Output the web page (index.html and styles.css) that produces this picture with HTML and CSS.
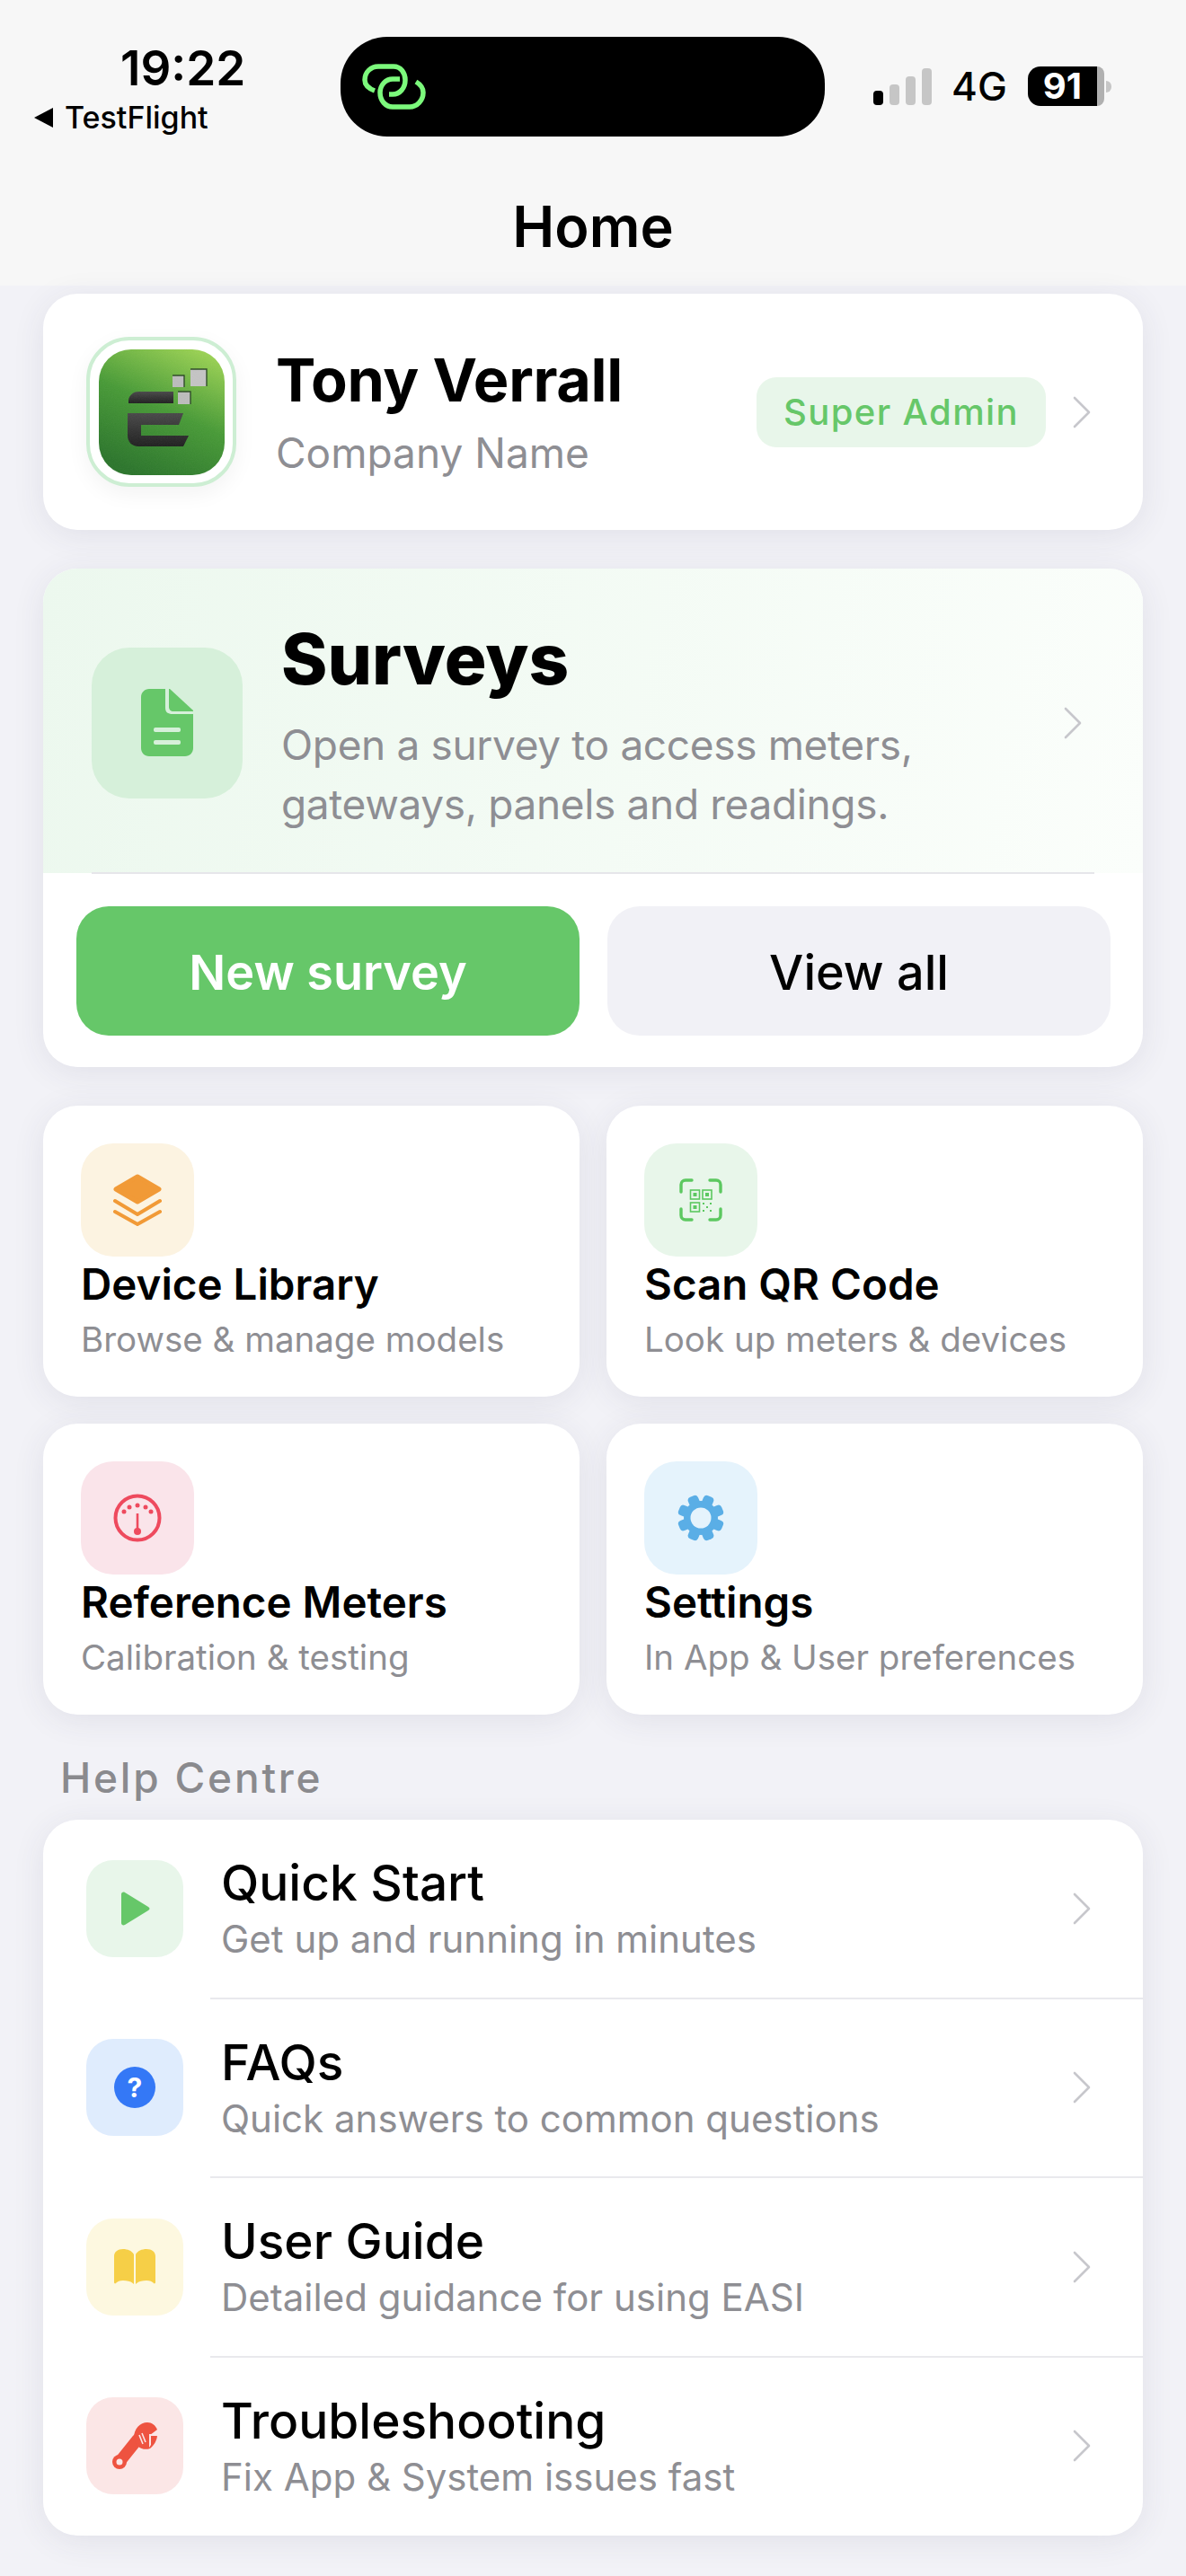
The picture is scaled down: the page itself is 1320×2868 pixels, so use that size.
FILE: index.html
```html
<!DOCTYPE html>
<html lang="en">
<head>
<meta charset="utf-8">
<title>Home</title>
<link rel="stylesheet" href="styles.css">
</head>
<body>
<header class="nav">
  <div class="status">
    <div class="status-left">
      <div class="time">19:22</div>
      <div class="back"><span class="back-arrow"></span><span>TestFlight</span></div>
    </div>
    <div class="island">
      <svg class="link-icon" viewBox="0 0 90 72" fill="none" stroke="#7cf97c" stroke-width="5.5" stroke-linecap="butt">
        <path d="M22 41C14 38 11 34 11 29C11 20 18 14 26 14H43C51 14 56 21 56 29C56 38 50 45 42 45H38"/>
        <path d="M68 31C73 34 76 38 76 43C76 52 69 59 61 59H42C34 59 28 52 28 43C28 35 34 28 42 28H50"/>
      </svg>
    </div>
    <div class="status-right">
      <svg class="signal" viewBox="0 0 65 41">
        <rect x="0" y="25" width="11" height="16" rx="4" fill="#000"/>
        <rect x="18" y="18" width="11" height="23" rx="4" fill="#c6c6c6"/>
        <rect x="36" y="9" width="11" height="32" rx="4" fill="#c6c6c6"/>
        <rect x="54" y="0" width="11" height="41" rx="4" fill="#c6c6c6"/>
      </svg>
      <span class="net">4G</span>
      <div class="battery"><div class="battery-fill">91</div><div class="battery-end"></div><div class="battery-nub"></div></div>
    </div>
  </div>
  <h1 class="nav-title">Home</h1>
</header>

<main class="main">
  <section class="card profile">
    <div class="avatar-ring">
      <svg class="avatar" viewBox="0 0 140 140">
        <defs>
          <linearGradient id="logoBg" x1="0.8" y1="0" x2="0.35" y2="1">
            <stop offset="0" stop-color="#9bd253"/>
            <stop offset="0.5" stop-color="#479a36"/>
            <stop offset="1" stop-color="#2b752b"/>
          </linearGradient>
          <linearGradient id="logoE" x1="0" y1="0" x2="0" y2="1">
            <stop offset="0" stop-color="#484848"/>
            <stop offset="1" stop-color="#1f1f1f"/>
          </linearGradient>
          <filter id="grain" x="0" y="0" width="100%" height="100%">
            <feTurbulence type="fractalNoise" baseFrequency="0.9" numOctaves="2"/>
            <feColorMatrix type="saturate" values="0"/>
            <feComponentTransfer><feFuncA type="linear" slope="0.07"/></feComponentTransfer>
            <feComposite in2="SourceGraphic" operator="in"/>
          </filter>
        </defs>
        <rect width="140" height="140" rx="36" fill="url(#logoBg)"/>
        <path d="M33 60V57C33 52 38 47 44 47H83V60Z" fill="url(#logoE)"/>
        <path d="M32 71H94L89 84H47V96H100L94 108H44C37 108 32 103 32 96Z" fill="url(#logoE)"/>
        <rect x="82" y="29" width="13" height="13" fill="#bcbcbc"/>
        <rect x="102" y="22" width="18" height="19" fill="#c4c4c4"/>
        <rect x="88" y="47" width="14" height="14" fill="#bcbcbc"/>
        <path d="M82 29H95V42M102 22H120V41M88 47H102V61" fill="none" stroke="#2c4a24" stroke-width="1.4"/>
        <rect width="140" height="140" rx="36" fill="#000" filter="url(#grain)"/>
      </svg>
    </div>
    <div class="profile-text">
      <div class="profile-name">Tony Verrall</div>
      <div class="profile-company">Company Name</div>
    </div>
    <div class="badge">Super Admin</div>
    <svg class="chev" viewBox="0 0 20 36"><path d="M2 2L18 18L2 34"/></svg>
  </section>

  <section class="card surveys">
    <div class="surveys-head">
      <div class="surveys-icon">
        <svg class="doc" viewBox="0 0 58 75">
          <path d="M9 0H27V21C27 26 30 28 35 28H58V66C58 71 54 75 49 75H9C4 75 0 71 0 66V9C0 4 4 0 9 0Z" fill="#66c769"/>
          <path d="M31 0H32L58 24V25H36C33 25 31 23 31 20Z" fill="#66c769"/>
          <rect x="14" y="43" width="30" height="5" rx="2" fill="#d6f0da"/>
          <rect x="14" y="57" width="30" height="5" rx="2" fill="#d6f0da"/>
        </svg>
      </div>
      <div class="surveys-text">
        <h2 class="surveys-title">Surveys</h2>
        <p class="surveys-desc">Open a survey to access meters, gateways, panels and readings.</p>
      </div>
      <svg class="chev" viewBox="0 0 20 36"><path d="M2 2L18 18L2 34"/></svg>
    </div>
    <div class="surveys-sep"></div>
    <div class="surveys-actions">
      <div class="btn btn-primary">New survey</div>
      <div class="btn btn-secondary">View all</div>
    </div>
  </section>

  <section class="tiles">
    <div class="card tile">
      <div class="tile-icon bg-orange">
        <svg class="i-layers" viewBox="0 0 54 58" fill="none" stroke="#f19a37" stroke-linecap="round" stroke-linejoin="round">
          <path d="M27 3L51 17L27 31L3 17Z" fill="#f19a37" stroke-width="5"/>
          <path d="M2 30L27 45L52 30" stroke-width="4"/>
          <path d="M2 42L27 56L52 42" stroke-width="4"/>
        </svg>
      </div>
      <div class="tile-title">Device Library</div>
      <div class="tile-sub">Browse &amp; manage models</div>
    </div>
    <div class="card tile">
      <div class="tile-icon bg-green">
        <svg class="i-qr" viewBox="0 0 48 48" fill="none" stroke="#5cc860" stroke-width="3.4" stroke-linecap="round">
          <path d="M2 15V7C2 4 4 2 7 2H14"/>
          <path d="M34 2H41C44 2 46 4 46 7V15"/>
          <path d="M46 34V41C46 44 44 46 41 46H34"/>
          <path d="M14 46H7C4 46 2 44 2 41V34"/>
          <g stroke-width="1.6">
            <rect x="12.5" y="13" width="10" height="10"/>
            <rect x="26" y="13" width="10" height="10"/>
            <rect x="12.5" y="27" width="10" height="10"/>
          </g>
          <g fill="#5cc860" stroke="none">
            <rect x="15.5" y="16" width="4" height="4"/>
            <rect x="29" y="16" width="4" height="4"/>
            <rect x="15.5" y="30" width="4" height="4"/>
            <rect x="26" y="27" width="2" height="2"/>
            <rect x="30" y="31" width="2" height="2"/>
            <rect x="34" y="27" width="2" height="2"/>
            <rect x="26" y="35" width="2" height="2"/>
            <rect x="34" y="35" width="2" height="2"/>
          </g>
        </svg>
      </div>
      <div class="tile-title">Scan QR Code</div>
      <div class="tile-sub">Look up meters &amp; devices</div>
    </div>
    <div class="card tile">
      <div class="tile-icon bg-pink">
        <svg class="i-gauge" viewBox="0 0 54 54" fill="none" stroke="#ee4a5e">
          <circle cx="27" cy="27" r="24.5" stroke-width="4"/>
          <path d="M27 22V42" stroke-width="2.6"/>
          <g fill="#ee4a5e" stroke="none">
            <circle cx="27" cy="13" r="2.5"/>
            <circle cx="27" cy="42" r="4"/>
            <circle cx="18" cy="15" r="2.5"/>
            <circle cx="36" cy="15" r="2.5"/>
            <circle cx="12" cy="20" r="2.5"/>
            <circle cx="42" cy="20" r="2.5"/>
          </g>
        </svg>
      </div>
      <div class="tile-title">Reference Meters</div>
      <div class="tile-sub">Calibration &amp; testing</div>
    </div>
    <div class="card tile">
      <div class="tile-icon bg-blue">
        <svg class="i-gear" viewBox="0 0 52 52">
          <g fill="#5aaee6">
            <circle cx="26" cy="26" r="19"/>
            <rect x="20" y="0" width="12" height="52" rx="4" transform="rotate(22.5 26 26)"/>
            <rect x="20" y="0" width="12" height="52" rx="4" transform="rotate(67.5 26 26)"/>
            <rect x="20" y="0" width="12" height="52" rx="4" transform="rotate(112.5 26 26)"/>
            <rect x="20" y="0" width="12" height="52" rx="4" transform="rotate(157.5 26 26)"/>
          </g>
          <circle cx="26" cy="26" r="11.5" fill="#e5f3fc"/>
        </svg>
      </div>
      <div class="tile-title">Settings</div>
      <div class="tile-sub">In App &amp; User preferences</div>
    </div>
  </section>

  <h3 class="section-label">Help Centre</h3>

  <section class="card list">
    <div class="row">
      <div class="row-icon bg-green">
        <svg class="i-play" viewBox="0 0 34 38"><path d="M2 3C2 1 4 0 6 1L32 17C34 18 34 20 32 21L6 37C4 38 2 37 2 35Z" fill="#66c769"/></svg>
      </div>
      <div class="row-text">
        <div class="row-title">Quick Start</div>
        <div class="row-sub">Get up and running in minutes</div>
      </div>
      <svg class="chev" viewBox="0 0 20 36"><path d="M2 2L18 18L2 34"/></svg>
    </div>
    <div class="row-sep"></div>
    <div class="row">
      <div class="row-icon bg-sky">
        <div class="i-help">?</div>
      </div>
      <div class="row-text">
        <div class="row-title">FAQs</div>
        <div class="row-sub">Quick answers to common questions</div>
      </div>
      <svg class="chev" viewBox="0 0 20 36"><path d="M2 2L18 18L2 34"/></svg>
    </div>
    <div class="row-sep"></div>
    <div class="row">
      <div class="row-icon bg-yellow">
        <svg class="i-book" viewBox="0 0 46 40">
          <path d="M0 8C0 3 4 0 10 0C15 0 20 2 22 6V39C19 36 15 35 10 35C6 35 4 36 2 38C1 39 0 38 0 37Z" fill="#f6cf47"/>
          <path d="M46 8C46 3 42 0 36 0C31 0 26 2 24 6V39C27 36 31 35 36 35C40 35 42 36 44 38C45 39 46 38 46 37Z" fill="#f6cf47"/>
        </svg>
      </div>
      <div class="row-text">
        <div class="row-title">User Guide</div>
        <div class="row-sub">Detailed guidance for using EASI</div>
      </div>
      <svg class="chev" viewBox="0 0 20 36"><path d="M2 2L18 18L2 34"/></svg>
    </div>
    <div class="row-sep"></div>
    <div class="row">
      <div class="row-icon bg-red">
        <svg class="i-wrench" viewBox="0 0 51 52">
          <path d="M8 44L28 19" stroke="#ee5340" stroke-width="13" stroke-linecap="round" fill="none"/>
          <circle cx="8" cy="44" r="8" fill="#ee5340"/>
          <path d="M24 17C24 7 31 0 39 0C44 0 48 3 50 8L42 14H50C50 20 46 26 42 29C34 32 25 27 24 17Z" fill="#ee5340"/>
          <circle cx="8" cy="44" r="3.5" fill="#fbe6e6"/>
          <path d="M41 13L51 13L51 15L43 15L43 25L41 28Z" fill="#fbe6e6"/>
          <path d="M30 14L34 24M33 12L37 22" stroke="#fbe6e6" stroke-width="1.6"/>
        </svg>
      </div>
      <div class="row-text">
        <div class="row-title">Troubleshooting</div>
        <div class="row-sub">Fix App &amp; System issues fast</div>
      </div>
      <svg class="chev" viewBox="0 0 20 36"><path d="M2 2L18 18L2 34"/></svg>
    </div>
  </section>
</main>
</body>
</html>
```

FILE: styles.css
```css
* { box-sizing: border-box; }
html, body { margin: 0; padding: 0; }
body {
  width: 1320px;
  min-height: 2868px;
  background: #f2f2f7;
  font-family: Inter, "Liberation Sans", sans-serif;
  color: #000;
  overflow-x: hidden;
}

/* Header */
.nav { height: 318px; background: #f7f7f7; display: flex; flex-direction: column; }
.status { height: 152px; padding-top: 41px; display: flex; }
.status-left { width: 379px; }
.time { font-size: 53px; font-weight: 600; line-height: 64px; margin-left: 134px; margin-top: 3px; }
.back { display: flex; align-items: center; gap: 13px; margin-left: 38px; margin-top: 3px; font-size: 34px; font-weight: 500; line-height: 40px; }
.back-arrow { width: 0; height: 0; border-style: solid; border-width: 11px 21px 11px 0; border-color: transparent #000 transparent transparent; }
.island { width: 539px; height: 111px; border-radius: 52px; background: #000; padding: 19px 0 0 16px; }
.link-icon { display: block; width: 90px; height: 72px; }
.status-right { display: flex; align-items: flex-start; padding-top: 33px; padding-left: 54px; }
.signal { width: 65px; height: 41px; display: block; margin-top: 2px; }
.net { font-size: 44px; font-weight: 500; line-height: 44px; margin-left: 22px; }
.battery { display: flex; align-items: center; margin-left: 23px; height: 44px; }
.battery-fill { width: 77px; height: 44px; background: #000; color: #fff; border-radius: 14px 0 0 14px; font-size: 40px; font-weight: 700; line-height: 44px; text-align: center; }
.battery-end { width: 8px; height: 44px; background: #b0b0b0; border-radius: 0 12px 12px 0; }
.battery-nub { width: 6px; height: 13px; margin-left: 2px; background: #c6c6c6; border-radius: 0 6px 6px 0; }
.nav-title { margin: 65px 0 0; font-size: 63px; font-weight: 600; line-height: 70px; text-align: center; }

/* Shared */
.main { padding: 9px 48px 0; display: flex; flex-direction: column; }
.card { background: #fff; border-radius: 38px; box-shadow: 0 6px 36px rgba(60, 60, 90, 0.09); }
.chev { width: 20px; height: 36px; flex: none; fill: none; stroke: #c7c7cc; stroke-width: 2.6; stroke-linecap: round; stroke-linejoin: round; }
.bg-orange { background: #fcf3e1; }
.bg-green { background: #e8f6ea; }
.bg-pink { background: #fae4ea; }
.bg-blue { background: #e5f3fc; }
.bg-sky { background: #dfecfd; }
.bg-yellow { background: #fdf8e0; }
.bg-red { background: #fbe6e6; }

/* Profile */
.profile { height: 263px; display: flex; align-items: center; padding: 0 58px 0 48px; }
.avatar-ring { width: 167px; height: 167px; flex: none; border: 4px solid #cdeed3; border-radius: 48px; background: #fff; display: flex; align-items: center; justify-content: center; box-shadow: 0 8px 24px rgba(0, 0, 0, 0.05); }
.avatar { width: 140px; height: 140px; display: block; }
.profile-text { margin-left: 44px; flex: 1; }
.profile-name { font-size: 66.5px; font-weight: 700; line-height: 76px; letter-spacing: -0.3px; }
.profile-company { font-size: 46px; font-weight: 400; line-height: 56px; color: #8e8e93; margin-top: 15px; }
.badge { width: 322px; height: 78px; border-radius: 22px; background: #e8f6ea; color: #66c769; font-size: 40px; font-weight: 500; letter-spacing: 1.4px; line-height: 78px; text-align: center; margin-right: 30px; }

/* Surveys */
.surveys { height: 555px; margin-top: 43px; overflow: hidden; }
.surveys-head { height: 339px; display: flex; align-items: center; padding: 4px 68px 0 54px; background: linear-gradient(100deg, #ecf8ee 0%, #fbfefb 100%); }
.surveys-icon { width: 168px; height: 168px; flex: none; border-radius: 42px; background: #d6f0da; display: flex; align-items: center; justify-content: center; }
.doc { width: 58px; height: 75px; display: block; }
.surveys-text { flex: 1; margin-left: 43px; padding-top: 4px; }
.surveys-title { margin: 0; font-size: 78px; font-weight: 800; line-height: 96px; }
.surveys-desc { margin: 14px 0 0; font-size: 46px; font-weight: 400; letter-spacing: -0.35px; line-height: 66px; color: #8e8e93; width: 740px; }
.surveys-sep { height: 2px; margin: -1px 54px 0; background: #e6e6ea; position: relative; }
.surveys-actions { display: flex; gap: 31px; padding: 36px 36px 0 37px; }
.btn { flex: 1; height: 144px; border-radius: 36px; font-size: 54px; font-weight: 600; line-height: 147px; text-align: center; }
.btn-primary { background: #66c769; color: #fff; }
.btn-secondary { background: #f1f1f6; color: #000; font-weight: 500; }

/* Tiles */
.tiles { display: grid; grid-template-columns: 597px 597px; gap: 30px; margin-top: 43px; }
.tile { height: 324px; padding: 42px 42px 0; }
.tile-icon { width: 126px; height: 126px; border-radius: 36px; display: flex; align-items: center; justify-content: center; }
.tile-title { font-size: 47.5px; font-weight: 600; line-height: 58px; margin-top: 2px; }
.tile-sub { font-size: 38.5px; font-weight: 400; line-height: 50px; color: #8e8e93; margin-top: 7px; }
.i-layers { width: 54px; height: 58px; }
.i-qr { width: 48px; height: 48px; }
.i-gauge { width: 54px; height: 54px; }
.i-gear { width: 52px; height: 52px; }

/* Help */
.section-label { margin: 42px 0 0 19px; font-size: 46px; font-weight: 500; line-height: 56px; letter-spacing: 2.8px; color: #8a8a8e; }
.list { margin-top: 19px; height: 797px; }
.row { height: 197.5px; display: flex; align-items: center; padding: 0 58px 0 48px; }
.row-icon { width: 108px; height: 108px; flex: none; border-radius: 30px; display: flex; align-items: center; justify-content: center; }
.row-text { flex: 1; margin-left: 42px; }
.row-title { font-size: 55px; font-weight: 500; line-height: 64px; }
.row-sub { font-size: 42px; font-weight: 400; line-height: 52px; color: #8e8e93; margin-top: 5px; }
.row-sep { height: 2px; margin-left: 186px; background: #e9e9ed; }
.i-play { width: 34px; height: 38px; }
.i-help { width: 46px; height: 46px; border-radius: 50%; background: #3478f6; color: #fff; font-size: 30px; font-weight: 700; line-height: 46px; text-align: center; }
.i-book { width: 46px; height: 40px; }
.i-wrench { width: 51px; height: 52px; }
```
